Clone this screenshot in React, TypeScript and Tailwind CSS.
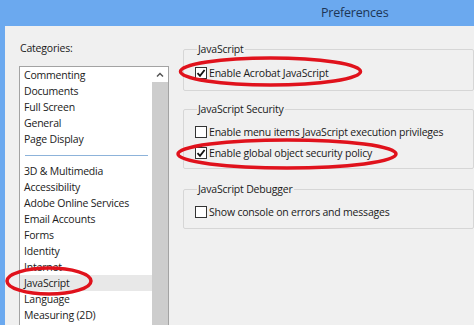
import React from "react"

const categoriesTop = ["Commenting", "Documents", "Full Screen", "General", "Page Display"]
const categoriesBottom = [
  "3D & Multimedia",
  "Accessibility",
  "Adobe Online Services",
  "Email Accounts",
  "Forms",
  "Identity",
  "Internet",
  "JavaScript",
  "Language",
  "Measuring (2D)",
]

function CheckBox({ checked }: { checked: boolean }) {
  return (
    <div className="w-[12px] h-[12px] border border-[#333] bg-white flex items-center justify-center shrink-0">
      {checked && (
        <svg width="10" height="10" viewBox="0 0 10 10">
          <path d="M1.5 5.2 L4 7.8 L8.6 2" fill="none" stroke="#111" strokeWidth="1.8" />
        </svg>
      )}
    </div>
  )
}

function Option({ label, checked }: { label: string; checked: boolean }) {
  return (
    <div className="h-[16px] flex items-center gap-[2px]">
      <CheckBox checked={checked} />
      <span className="leading-[16px]">{label}</span>
    </div>
  )
}

function Group({ title, className, children }: { title: string; className: string; children: React.ReactNode }) {
  return (
    <fieldset className={`border border-[#d6d6d6] rounded-[2px] pl-[11px] ${className}`}>
      <legend className="ml-[2px] px-[1px] leading-[16px]">{title}</legend>
      {children}
    </fieldset>
  )
}

export default function App() {
  return (
    <div className="relative w-[474px] h-[325px] overflow-hidden flex flex-col text-[10.5px] tracking-[-0.2px] text-[#1a1a1a] font-['Open_Sans',sans-serif]">
      {/* barra de título */}
      <div className="h-[26px] bg-[#6ba9ef] pl-[321px] flex items-center">
        <span className="text-[12.5px] text-[#1d3656] leading-none">Preferences</span>
      </div>

      <div className="flex flex-1 min-h-0">
        <div className="w-[5px] bg-[#6ba9ef]" />
        <div className="flex-1 bg-[#f0f0f0] flex min-h-0">
          {/* columna de categorías */}
          <div className="w-[170px] pl-[14px] pt-[14px] flex flex-col min-h-0">
            <div className="pl-[1px] leading-[16px]">Categories:</div>
            <div className="mt-[10px] w-[150px] flex-1 min-h-0 border-l border-t border-r border-[#a3a3a3] bg-white flex overflow-hidden">
              <div className="flex-1">
                {categoriesTop.map((c) => (
                  <div key={c} className="h-[16px] leading-[16px] pl-[4px]">
                    {c}
                  </div>
                ))}
                <div className="h-[16px] flex items-center pl-[5px] pr-[4px]">
                  <div className="h-px w-full bg-[#8db3da]" />
                </div>
                {categoriesBottom.map((c) => (
                  <div
                    key={c}
                    className={`h-[16px] leading-[16px] pl-[4px] ${c === "JavaScript" ? "bg-[#e8e8e8]" : ""}`}
                  >
                    {c}
                  </div>
                ))}
              </div>
              <div className="w-[16px] flex flex-col">
                <div className="h-[15px] flex items-center justify-center">
                  <svg width="8" height="6" viewBox="0 0 8 6">
                    <path d="M1 4.5 L4 1.5 L7 4.5" fill="none" stroke="#555" strokeWidth="1.5" />
                  </svg>
                </div>
                <div className="flex-1 bg-[#cdcdcd]" />
              </div>
            </div>
          </div>

          {/* opciones */}
          <div className="flex-1 pl-[8px] pt-[15px] flex flex-col">
            <Group title="JavaScript" className="h-[50px]">
              <div className="pt-[8px]">
                <Option label="Enable Acrobat JavaScript" checked />
              </div>
            </Group>
            <Group title="JavaScript Security" className="h-[68px] mt-[10px]">
              <div className="pt-[7px] flex flex-col gap-[5px]">
                <Option label="Enable menu items JavaScript execution privileges" checked={false} />
                <Option label="Enable global object security policy" checked />
              </div>
            </Group>
            <Group title="JavaScript Debugger" className="h-[48px] mt-[12px]">
              <div className="pt-[7px]">
                <Option label="Show console on errors and messages" checked={false} />
              </div>
            </Group>
          </div>
        </div>
      </div>

      {/* marcas rojas */}
      <svg className="absolute top-0 left-0 pointer-events-none" width="474" height="325" viewBox="0 0 474 325">
        <g fill="none" stroke="#e0121c" strokeWidth="3.5">
          <ellipse cx="270.5" cy="71.5" rx="90" ry="13.5" />
          <ellipse cx="287" cy="154" rx="109" ry="14" />
          <ellipse cx="49" cy="281" rx="42" ry="13" />
        </g>
      </svg>
    </div>
  )
}
